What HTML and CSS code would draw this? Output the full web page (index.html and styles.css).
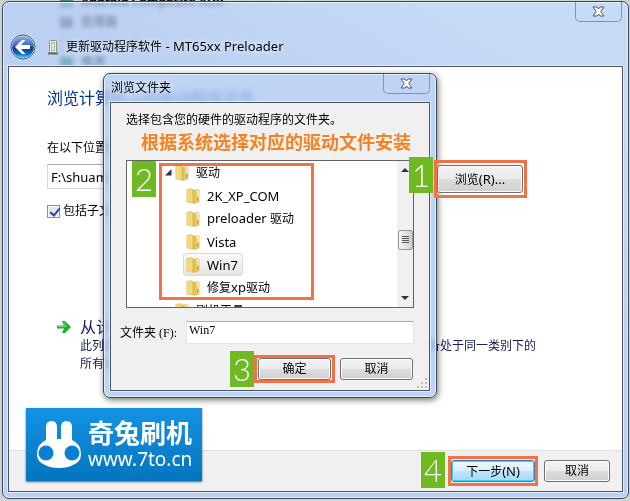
FILE: index.html
```html
<!DOCTYPE html>
<html lang="zh-CN">
  <head>
    <title>更新驱动程序软件 - MT65xx Preloader</title>
    <meta charset="UTF-8">
    <meta name="viewport" content="width=device-width, initial-scale=1.0">
    <link rel="stylesheet" href="styles.css">
  </head>
  <body>
    <!-- device manager showing through the glass -->
    <div class="behind" aria-hidden="true">
      <div><i></i>Android Composite ADB</div>
      <div><i class="box"></i>处理器</div>
      <div class="faint"><i></i>磁盘驱动器</div>
      <div><i class="green"></i>电池</div>
    </div>

    <div class="window">
      <button class="close" aria-label="关闭">
        <svg width="13" height="11" viewBox="0 0 13 11"><path d="M1 1h4l1.500 2 1.500-2h4L8.700 5.500 12 10H8L6.500 8 5 10H1l3.300-4.500z" fill="#fff" stroke="#4c5568" stroke-width="1"/></svg>
      </button>
      <header>
        <button class="back" aria-label="返回">
          <svg width="26" height="26" viewBox="0 0 26 26">
            <defs>
              <linearGradient id="ball" x1="0" y1="0" x2="0" y2="1">
                <stop offset="0" stop-color="#8fb2dd"/>
                <stop offset=".48" stop-color="#2e62b0"/>
                <stop offset=".52" stop-color="#0c3586"/>
                <stop offset=".8" stop-color="#1266c2"/>
                <stop offset="1" stop-color="#36d0f8"/>
              </linearGradient>
            </defs>
            <circle cx="13" cy="13" r="12" fill="#dce8f8" stroke="#43597c"/>
            <circle cx="13" cy="13" r="10.800" fill="url(#ball)"/>
            <path d="M5 13l7-7h3.500l-4.500 5H20v4h-9l4.500 5H12z" fill="#fff"/>
          </svg>
        </button>
        <svg class="device" width="10" height="16" viewBox="0 0 10 16">
          <rect x="1.500" y="1.500" width="7" height="12" rx="1" fill="#f4f4ee" stroke="#8d8f88"/>
          <rect x="3.500" y="3.500" width="3" height="8" fill="#e4f4cc" stroke="#a3b68a"/>
          <path d="M0 14.500h10" stroke="#686a66" stroke-width="2"/>
        </svg>
        <h1>更新驱动程序软件<span class="en"> - MT65xx Preloader</span></h1>
      </header>

      <div class="client">
        <main>
          <h2>浏览计算机上的驱动程序文件</h2>
          <label class="where" for="path">在以下位置搜索驱动程序软件:</label>
          <div class="path-row">
            <input class="en" type="text" id="path" value="F:\shuame\驱动\Win7">
            <div class="callout">
              <span class="badge one">1</span>
              <button class="btn browse">浏览<span class="en">(R)...</span></button>
            </div>
          </div>
          <div class="include">
            <input type="checkbox" id="sub" checked>
            <label for="sub">包括子文件夹(I)</label>
          </div>
          <button class="command">
            <svg width="14" height="14" viewBox="0 0 14 14"><path d="M0 5.500h7L5 1h3l6 6-6 6H5l2-4.500H0z" fill="#1fae2b"/><path d="M1 6.500h8L7 2.500" fill="none" stroke="#7be07c"/></svg>
            <span>
              <strong>从计算机的设备驱动程序列表中选择(L)</strong>
              此列表将显示与该设备兼容的已安装的驱动程序软件，以及与该设备处于同一类别下的所有驱动程序软件。
            </span>
          </button>
        </main>
        <footer>
          <div class="callout">
            <span class="badge four">4</span>
            <button class="btn next">下一步<span class="en">(N)</span></button>
          </div>
          <button class="btn cancel">取消</button>
        </footer>
      </div>
    </div>

    <div class="dialog" role="dialog" aria-labelledby="dialog-title">
      <button class="close" aria-label="关闭">
        <svg width="13" height="11" viewBox="0 0 13 11"><path d="M1 1h4l1.500 2 1.500-2h4L8.700 5.500 12 10H8L6.500 8 5 10H1l3.300-4.500z" fill="#fff" stroke="#4c5568" stroke-width="1"/></svg>
      </button>
      <h3 id="dialog-title">浏览文件夹</h3>
      <div class="dialog-body">
        <p class="hint">选择包含您的硬件的驱动程序的文件夹。</p>
        <p class="note">根据系统选择对应的驱动文件安装</p>

        <svg class="symbols" width="0" height="0">
          <defs>
            <linearGradient id="paper" x1="0" y1="0" x2="1" y2="0">
              <stop offset="0" stop-color="#f7e692"/>
              <stop offset="1" stop-color="#dfb945"/>
            </linearGradient>
            <symbol id="folder" viewBox="0 0 14 16">
              <path d="M7 2.500l5-1 1 1V14l-4 1z" fill="#e9cd6c" stroke="#cfa94a" stroke-width=".6"/>
              <path d="M10 3l2-.4v6" fill="none" stroke="#fffbe0"/>
              <path d="M.8 1.500L5 .6l4 2.200V15.500L.8 14z" fill="url(#paper)" stroke="#d6b65c" stroke-width=".6"/>
              <path d="M5.200 1.500v13" stroke="#fff2b0" stroke-width=".6"/>
              <path d="M11.500 9.500v3" stroke="#5aa7a0"/>
            </symbol>
          </defs>
        </svg>

        <div class="tree-wrap">
          <div class="tree">
            <ul>
              <li class="top"><svg class="twist" width="7" height="7"><path d="M6.500 0v6.500H0z" fill="#333"/></svg><svg class="folder"><use href="#folder"/></svg><p>驱动</p></li>
              <li><svg class="folder"><use href="#folder"/></svg><p class="en">2K_XP_COM</p></li>
              <li><svg class="folder"><use href="#folder"/></svg><p><span class="en">preloader </span>驱动</p></li>
              <li><svg class="folder"><use href="#folder"/></svg><p class="en">Vista</p></li>
              <li class="selected"><svg class="folder"><use href="#folder"/></svg><p class="en">Win7</p></li>
              <li><svg class="folder"><use href="#folder"/></svg><p>修复<span class="en">xp</span>驱动</p></li>
              <li class="top"><svg class="twist" width="7" height="7"><path d="M2 0l4 3.500L2 7z" fill="#fff" stroke="#999"/></svg><svg class="folder"><use href="#folder"/></svg><p>刷机工具</p></li>
            </ul>
            <div class="scroll">
              <svg width="8" height="4"><path d="M0 4l4-4 4 4z" fill="#333"/></svg>
              <div class="thumb"><i></i><i></i><i></i><i></i></div>
              <svg width="8" height="4"><path d="M0 0l4 4 4-4z" fill="#333"/></svg>
            </div>
          </div>
          <div class="frame"><span class="badge two">2</span></div>
        </div>

        <div class="folder-row">
          <label for="folder-name">文件夹 (F):</label>
          <input type="text" id="folder-name" value="Win7">
        </div>
        <div class="actions">
          <div class="callout">
            <span class="badge three">3</span>
            <button class="btn">确定</button>
          </div>
          <button class="btn">取消</button>
        </div>
        <svg class="grip" width="11" height="11" viewBox="0 0 11 11"><path d="M8 0h2v2H8zM4 4h2v2H4zM8 4h2v2H8zM0 8h2v2H0zM4 8h2v2H4zM8 8h2v2H8z" fill="#bcbcbc"/></svg>
      </div>
    </div>

    <div class="logo">
      <svg width="46" height="50" viewBox="0 0 46 50">
        <path d="M10 21V8q0-6 5.500-6T21 8v12h4V8q0-6 5.500-6T36 8v13q9 4 9 14 0 8-8 11-5 3-14 3T9 46Q1 43 1 35q0-10 9-14z" fill="#fff"/>
        <circle cx="10" cy="34" r="7.500" fill="#0b7fd0"/>
        <circle cx="36" cy="34" r="7.500" fill="#0b7fd0"/>
      </svg>
      <div>
        <b>奇兔刷机</b>
        <span>www.7to.cn</span>
      </div>
    </div>
  </body>
</html>
```

FILE: styles.css
```css
* {
  box-sizing: border-box;
}

body {
  margin: 0;
  padding: 1px 1px 2px 2px;
  min-height: 100vh;
  display: flex;
  background: #cdd2d2;
  font: 12px/18px "Noto Sans", "Noto Sans CJK SC", sans-serif;
  color: #000;
}

h1, h2, h3, p, ul {
  margin: 0;
  padding: 0;
  font-size: 12px;
  font-weight: normal;
}

button, input {
  font: inherit;
  color: inherit;
  margin: 0;
}

svg {
  display: block;
  flex: none;
}

.en {
  font-size: 13px;
}

/* background window */
.behind {
  position: absolute;
  z-index: -2;
  top: -8px;
  left: 60px;
  line-height: 20px;
  font-weight: bold;
}
.behind div {
  display: flex;
  align-items: center;
  gap: 8px;
}
.behind i {
  width: 13px;
  height: 11px;
  background: #4c857c;
}
.behind .box {
  background: #3f4a58;
}
.behind .green {
  background: #00683c;
}
.behind .faint {
  opacity: .15;
}

/* main window */
.window {
  position: relative;
  flex: 1;
  display: flex;
  flex-direction: column;
  padding: 0 5px 6px;
  border: 1px solid #3d4858;
  border-radius: 7px;
}
.window::before {
  content: "";
  position: absolute;
  z-index: -1;
  inset: 0;
  border-radius: 6px;
  background: linear-gradient(30deg, rgba(180, 207, 255, .7) 60%, rgba(196, 222, 255, .8) 90%);
  box-shadow: inset 0 0 0 1px #e3eefb;
  backdrop-filter: blur(2px);
}

.close {
  position: absolute;
  top: 0;
  right: 6px;
  width: 47px;
  height: 20px;
  display: flex;
  align-items: center;
  justify-content: center;
  padding: 0;
  background: none;
  border: 1px solid #8193ad;
  border-top: none;
  border-radius: 0 0 5px 5px;
}

header {
  height: 64px;
  padding: 25px 0 0 2px;
  display: flex;
  align-items: center;
}
.back {
  padding: 0;
  border: none;
  background: none;
}
.device {
  margin: 0 8px 0 12px;
}
header h1 {
  text-shadow: 0 0 6px #fff;
}

.client {
  flex: 1;
  display: flex;
  flex-direction: column;
  background: #fff;
  border: 1px solid #4c5668;
  box-shadow: 0 0 0 1px #dfeafa;
}
main {
  flex: 1;
  padding: 19px 83px 0 38px;
}
main h2 {
  font-size: 16px;
  line-height: 24px;
  color: #003399;
}
.where {
  display: block;
  margin-top: 29px;
}
.path-row {
  display: flex;
  align-items: flex-start;
  gap: 7px;
  margin: 3px 12px 4px 0;
}
.path-row input {
  flex: 1;
  min-width: 0;
  height: 25px;
  margin-top: 4px;
  padding: 0 3px;
  border: 1px solid #d5dae2;
  border-top-color: #abadb3;
}
.include {
  display: flex;
  align-items: center;
  gap: 3px;
}
.include input {
  appearance: none;
  width: 13px;
  height: 13px;
  border: 1px solid #8e8f8f;
  background: #e4e8f0;
  box-shadow: inset 0 0 0 1px #fff;
}
.include input:checked::before {
  content: "";
  display: block;
  width: 4px;
  height: 8px;
  margin: 0 0 0 4px;
  border: solid #31479b;
  border-width: 0 2px 2px 0;
  transform: rotate(40deg);
}
.command {
  display: flex;
  gap: 9px;
  margin-top: 97px;
  padding: 0 0 0 10px;
  border: none;
  background: none;
  text-align: left;
  color: #151c55;
}
.command svg {
  margin-top: 3px;
}
.command strong {
  display: block;
  font-size: 16px;
  line-height: 20px;
  font-weight: normal;
}

footer {
  display: flex;
  align-items: center;
  justify-content: flex-end;
  gap: 6px;
  height: 41px;
  padding-right: 12px;
  background: #f0f0f0;
  border-top: 1px solid #dfdfdf;
}

.btn {
  height: 22px;
  min-width: 73px;
  padding: 0;
  border: 1px solid #707070;
  border-radius: 3px;
  background: linear-gradient(#f2f2f2, #ebebeb 50%, #dddddd 50%, #cfcfcf);
  box-shadow: inset 0 0 0 1px #fcfcfc;
  display: block;
  line-height: 18px;
}
.btn.browse {
  width: 86px;
  height: 28px;
}
.btn.next {
  width: 84px;
  border-color: #3c7fb1;
  background: linear-gradient(#ecf7fd, #d9f0fc 50%, #bee6fd 50%, #a7d9f5);
  box-shadow: inset 0 0 0 1px #41cdf5;
}
.btn.cancel {
  min-width: 66px;
}

/* step marks */
.callout {
  position: relative;
  z-index: 3;
  border: 3px solid #f27146;
}
.path-row .callout {
  padding: 2px 1px 2px 0;
}
footer .callout {
  padding: 1px 0;
}
.actions .callout {
  padding: 0 1px;
}
.badge {
  position: absolute;
  right: 100%;
  width: 24px;
  height: 36px;
  background: #6fb923;
  color: #fff;
  font: 300 31px/36px Lato, sans-serif;
  text-align: center;
}
.badge.one {
  top: -6px;
  margin-right: 4px;
}
.badge.two {
  top: -5px;
  margin-right: 6px;
}
.badge.three {
  top: -7px;
  margin-right: 3px;
}
.badge.four {
  top: -7px;
  margin-right: 6px;
}

/* folder dialog */
.dialog {
  position: absolute;
  z-index: 2;
  top: 73px;
  left: 103px;
  width: 334px;
  padding: 0 6px 6px;
  border: 1px solid #3d4858;
  border-radius: 7px;
  background: rgba(170, 198, 240, .75);
  box-shadow: inset 0 0 0 1px #e3eefb, 1px 2px 6px rgba(0, 0, 0, .55);
  backdrop-filter: blur(3px);
}
.dialog h3 {
  padding: 5px 0 5px 1px;
  text-shadow: 0 0 6px #fff;
}
.dialog-body {
  position: relative;
  padding: 8px 15px 7px;
  background: #f0f0f0;
  border: 1px solid #4c5668;
  box-shadow: 0 0 0 1px #dfeafa;
}
.note {
  padding-left: 12px;
  text-align: center;
  font-size: 18px;
  line-height: 26px;
  font-weight: bold;
  color: #f58220;
  white-space: nowrap;
}
.symbols {
  position: absolute;
}
.tree-wrap {
  position: relative;
  margin-top: 5px;
}
.tree {
  display: flex;
  height: 148px;
  overflow: hidden;
  background: #fff;
  border: 1px solid #5f646c;
}
.tree ul {
  flex: 1;
  list-style: none;
}
.tree li {
  display: flex;
  align-items: center;
  gap: 3px;
  height: 23px;
  padding-left: 59px;
}
.tree .top {
  padding-left: 38px;
}
.tree li p {
  padding: 0 4px;
}
.tree li .en {
  font-size: 13px;
}
.folder {
  width: 14px;
  height: 16px;
}
.tree .selected {
  width: fit-content;
  margin-left: 56px;
  padding-left: 2px;
  border: 1px solid #d9d9d9;
  border-radius: 3px;
  background: linear-gradient(#fafafa, #e5e5e5);
}
.scroll {
  width: 16px;
  padding: 7px 0;
  display: flex;
  flex-direction: column;
  align-items: center;
  justify-content: space-between;
  background: #f0f0f0;
}
.thumb {
  width: 15px;
  height: 20px;
  margin-top: 12px;
  padding: 5px 3px;
  border: 1px solid #989898;
  border-radius: 2px;
  background: linear-gradient(90deg, #f5f5f5, #cfcfcf);
}
.thumb i {
  display: block;
  height: 1px;
  margin-bottom: 1px;
  background: #555;
}
.frame {
  position: absolute;
  top: 3px;
  left: 33px;
  width: 155px;
  height: 137px;
  border: 3px solid #f27146;
}

.folder-row {
  display: flex;
  align-items: center;
  justify-content: space-between;
  gap: 6px;
  margin: 13px 0 11px -6px;
  font-family: "Liberation Serif", "Noto Sans CJK SC", serif;
  white-space: nowrap;
}
.folder-row input {
  width: 228px;
  height: 23px;
  padding: 0 2px 4px;
  border: 1px solid #e2e5ea;
  border-top-color: #abadb3;
}
.actions {
  display: flex;
  align-items: center;
  justify-content: flex-end;
  gap: 5px;
  padding-right: 1px;
}
.grip {
  position: absolute;
  right: 1px;
  bottom: 1px;
}

.logo {
  position: absolute;
  z-index: 4;
  top: 408px;
  left: 26px;
  display: flex;
  align-items: center;
  gap: 6px;
  padding: 10px 10px 11px 10px;
  background: linear-gradient(#1593e4, #0474bf);
  box-shadow: 0 1px 2px rgba(0, 0, 0, .6);
  color: #fff;
}
.logo b {
  display: block;
  font-size: 26px;
  line-height: 30px;
  font-weight: bold;
}
.logo span {
  display: block;
  font-size: 19px;
  line-height: 22px;
}
```
